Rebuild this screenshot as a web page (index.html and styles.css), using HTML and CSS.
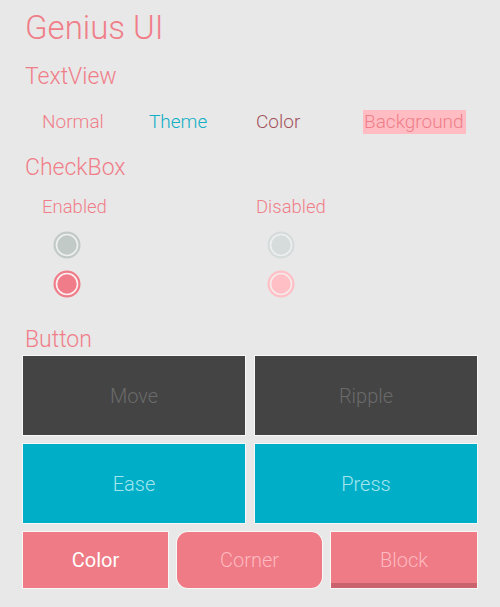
FILE: index.html
```html
<!DOCTYPE html>
<html>
<head>
<meta charset="utf-8">
<link rel="stylesheet" href="styles.css">
</head>
<body>
<div class="page">
  <h1 class="title">Genius UI</h1>

  <h2 class="section">TextView</h2>
  <div class="cols">
    <span class="tv tv-normal">Normal</span>
    <span class="tv tv-theme">Theme</span>
    <span class="tv tv-color">Color</span>
    <span class="tv tv-bg"><span class="bg-label">Background</span></span>
  </div>

  <h2 class="section">CheckBox</h2>
  <div class="checks">
    <div class="check-col">
      <div class="label">Enabled</div>
      <svg class="radio" width="28" height="28" viewBox="0 0 28 28"><circle cx="14" cy="14" r="13.5" fill="#c2cac8"/><circle cx="14" cy="14" r="10.5" fill="none" stroke="#eef0ef" stroke-width="1.6"/></svg>
      <svg class="radio" width="28" height="28" viewBox="0 0 28 28"><circle cx="14" cy="14" r="13.5" fill="#ef7c88"/><circle cx="14" cy="14" r="10.5" fill="none" stroke="#fbf0f1" stroke-width="1.6"/></svg>
    </div>
    <div class="check-col">
      <div class="label">Disabled</div>
      <svg class="radio" width="28" height="28" viewBox="0 0 28 28"><circle cx="14" cy="14" r="13.5" fill="#d6dbdb"/><circle cx="14" cy="14" r="10.5" fill="none" stroke="#eeefef" stroke-width="1.6"/></svg>
      <svg class="radio" width="28" height="28" viewBox="0 0 28 28"><circle cx="14" cy="14" r="13.5" fill="#ffbfc5"/><circle cx="14" cy="14" r="10.5" fill="none" stroke="#f6eaeb" stroke-width="1.6"/></svg>
    </div>
  </div>

  <h2 class="section section-btn">Button</h2>
  <div class="grid2">
    <div class="btn btn-dark">Move</div>
    <div class="btn btn-dark">Ripple</div>
    <div class="btn btn-teal">Ease</div>
    <div class="btn btn-teal">Press</div>
  </div>
  <div class="grid3">
    <div class="btn btn-pink btn-color">Color</div>
    <div class="btn btn-pink btn-corner">Corner</div>
    <div class="btn btn-pink btn-block">Block</div>
  </div>
</div>
</body>
</html>
```

FILE: styles.css
```css
html, body {
  margin: 0;
  padding: 0;
  background: #e8e8e8;
}
body {
  font-family: Roboto, "Noto Sans", sans-serif;
  font-weight: 300;
  width: 500px;
  height: 607px;
  overflow: hidden;
}
.page {
  padding: 8px 23px 0 23px;
}
.title {
  margin: 0 0 0 2px;
  font-size: 33px;
  font-weight: 300;
  line-height: 40px;
  color: #f07e89;
}
.section {
  margin: 0 0 0 2px;
  font-size: 23px;
  font-weight: 300;
  line-height: 30px;
  color: #f07e89;
}
.title + .section {
  margin-top: 14px;
}
.cols {
  display: grid;
  grid-template-columns: repeat(4, 107px);
  margin: 17px 0 18px 19px;
  height: 26px;
  align-items: center;
}
.tv {
  font-size: 19px;
  line-height: 24px;
}
.tv-normal { color: #f07e89; }
.tv-theme { color: #11aec6; }
.tv-color { color: #a3515b; }
.bg-label {
  display: inline-block;
  background: #ffbcc3;
  color: #f07e89;
  padding: 0 2px 0 1px;
}
.checks {
  display: grid;
  grid-template-columns: repeat(2, 214px);
  margin: 12px 0 0 19px;
}
.check-col {
  display: flex;
  flex-direction: column;
  align-items: flex-start;
}
.label {
  font-size: 18.5px;
  line-height: 24px;
  color: #f07e89;
}
.radio {
  display: block;
  margin-left: 11px;
}
.label + .radio { margin-top: 12px; }
.radio + .radio { margin-top: 11px; }
.section-btn {
  margin-top: 27px;
}
.grid2 {
  display: grid;
  grid-template-columns: 222px 222px;
  column-gap: 10px;
  row-gap: 9px;
  margin-top: 1px;
}
.btn {
  display: flex;
  align-items: center;
  justify-content: center;
  font-size: 20px;
  font-weight: 300;
  box-shadow: 0 0 0 1px rgba(255, 255, 255, 0.7);
}
.grid2 .btn {
  height: 79px;
}
.btn-dark {
  background: #444444;
  color: #6a6a6a;
}
.btn-teal {
  background: #00afc7;
  color: #a4e6ef;
}
.grid3 {
  display: grid;
  grid-template-columns: 145px 145px 146px;
  column-gap: 9px;
  margin-top: 9px;
}
.grid3 .btn {
  height: 56px;
}
.btn-pink {
  background: #ee7b86;
  color: #ffb9c0;
}
.btn-color {
  color: #ffffff;
  font-weight: 400;
}
.btn-corner {
  border-radius: 11px;
}
.btn-block {
  box-sizing: border-box;
  border-bottom: 5px solid #c9646e;
  padding-top: 5px;
}
```
